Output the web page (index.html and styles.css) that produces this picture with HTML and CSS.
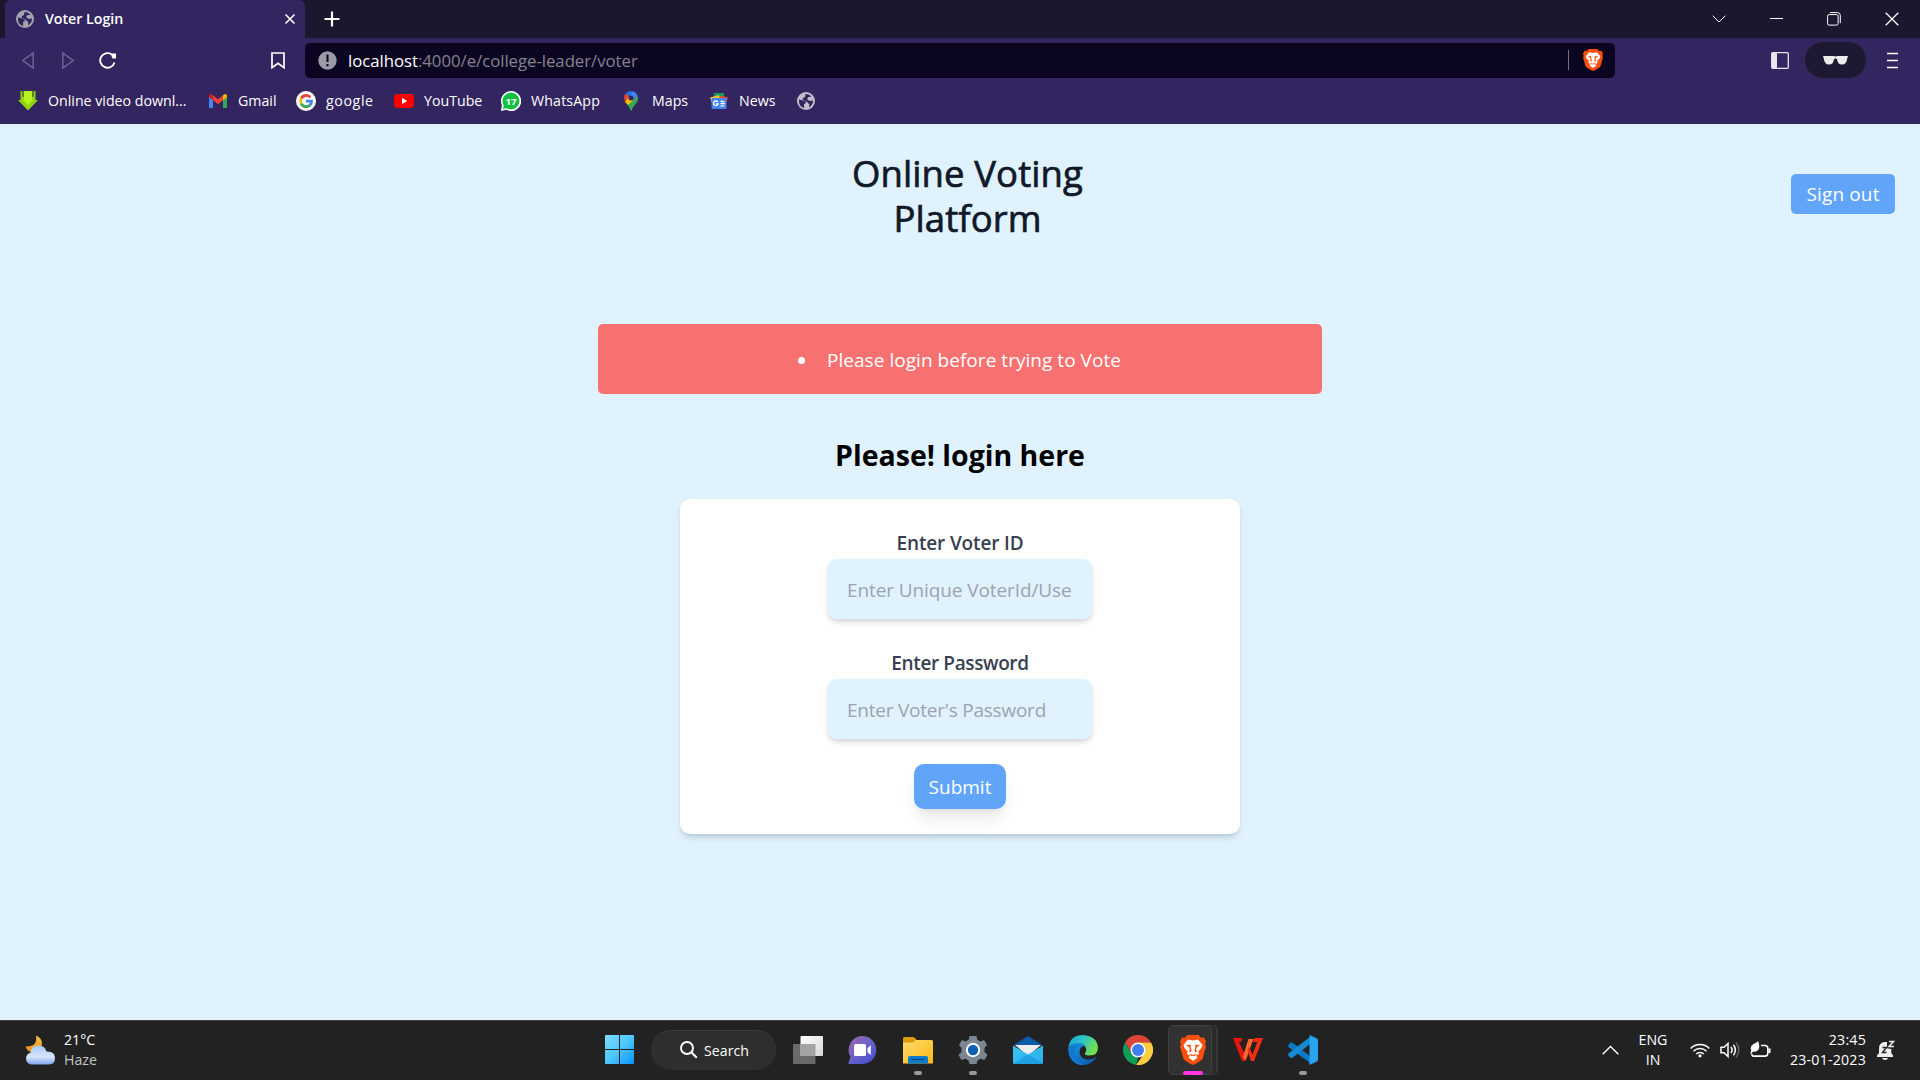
FILE: index.html
```html
<!DOCTYPE html>
<html lang="en">
<head>
<meta charset="utf-8">
<title>Voter Login</title>
<link rel="stylesheet" href="styles.css">
</head>
<body>
<svg class="defs" width="0" height="0">
  <symbol id="globe" viewBox="0 0 18 18"><circle cx="9" cy="9" r="9"/><path class="land" d="M2 7.200Q3.500 8 6 8.200L8.500 9.500 9 11 7 12 7.200 16Q2 14.500 2 9zM8.500 2Q12.500 1.700 14.500 4.700L11.500 5 10 7 12.500 9 16 8.500Q16 13 12 15.400L12.300 12.300 9.500 9.500 6.200 8 5.500 6.300 8 5z"/></symbol>
  <symbol id="brave" viewBox="0 0 26 30"><path d="M7.500 0h11L21 2.700l3-.3 2 4-1 3 1 2-3.300 12Q21 26 13 30 5 26 3.300 23.400L0 11.400l1-2-1-3 2-4 3 .3z"/><path fill="#fff" d="M8 4.500 13 5.500 18 4.500 22.500 10 21.500 13 18.300 16.500 19 19 16 20.500 17.500 22.500 13 26 8.500 22.500 10 20.500 7 19 7.700 16.500 4.500 13 3.500 10z"/><path class="cut" d="M6 10.300 11 9.500 10.500 11 11.500 15.500 10.500 17.500 9 16.500 10 14 9 12zM20 10.300 15 9.500 15.500 11 14.500 15.500 15.500 17.500 17 16.500 16 14 17 12zM9 18.500 13 20 17 18.500 14.500 21.300 13 20.800 11.500 21.300z"/></symbol>
</svg>
<div class="screen">
  <header class="browser">
    <div class="tabstrip">
      <div class="tab">
        <svg class="favicon" width="18" height="18"><use href="#globe"/></svg>
        <span class="tab-title t">Voter Login</span>
        <svg width="12" height="12" viewBox="0 0 12 12" class="line"><path stroke-width="1.600" d="M1.500 1.500l9 9M10.500 1.500l-9 9"/></svg>
      </div>
      <svg class="newtab line" width="16" height="16" viewBox="0 0 16 16"><path stroke-width="2.200" d="M8 .5v15M.5 8h15"/></svg>
      <div class="window-controls">
        <svg width="14" height="8" viewBox="0 0 14 8" class="line"><path d="M.7.7 7 7l6.300-6.300"/></svg>
        <svg width="13" height="14" viewBox="0 0 13 14" class="line"><path d="M0 6.500h13"/></svg>
        <svg width="14" height="14" viewBox="0 0 14 14" class="line"><rect x=".6" y="2.600" width="10.500" height="10.500" rx="1.500"/><path d="M3 .6h7.500q2.800 0 2.800 2.800V11"/></svg>
        <svg width="14" height="14" viewBox="0 0 14 14" class="line"><path stroke-width="1.300" d="M.7.7l12.600 12.600M13.300.7.7 13.300"/></svg>
      </div>
    </div>
    <div class="toolbar">
      <svg class="nav-back" width="12" height="17" viewBox="0 0 12 17"><path d="M11.200 1v15L.9 8.500z"/></svg>
      <svg class="nav-forward" width="12" height="17" viewBox="0 0 12 17"><path d="M.8 1v15L11.100 8.500z"/></svg>
      <svg class="reload line" width="18" height="17" viewBox="0 0 18 17"><path stroke-width="1.900" d="M15.500 10.500A7.300 7.300 0 1 1 12.500 2.300"/><path fill="#fff" stroke="none" d="M11.500 1.500l5.500 0V6.500h-3.500z"/></svg>
      <svg class="save line" width="14" height="17" viewBox="0 0 14 17"><path stroke-width="1.700" d="M1 1h12v14.700L7 11.200 1 15.700z"/></svg>
      <div class="address">
        <svg width="19" height="19" viewBox="0 0 19 19"><circle cx="9.500" cy="9.500" r="9.200" fill="#9a9ba6"/><path stroke="#0c0522" stroke-width="2" d="M9.500 3.500v7.500M9.500 13v2.200"/></svg>
        <span class="url"><span class="host t">localhost</span><span class="path t">:4000/e/college-leader/voter</span></span>
        <i class="divider"></i>
        <svg class="brave" width="20" height="22" viewBox="0 0 26 30" preserveAspectRatio="none"><use href="#brave" width="26" height="30"/></svg>
      </div>
      <svg class="sidebar" width="18" height="17" viewBox="0 0 18 17"><rect x=".7" y=".7" width="16.600" height="15.600" rx="1" fill="none" stroke="#e8e6ee" stroke-width="1.300"/><path fill="#e8e6ee" d="M1 1h5v15H1z"/></svg>
      <div class="private"><svg width="25" height="9" viewBox="0 0 25 9" fill="#ebebeb"><path d="M0 0h10.500q2 .8 4 0H25l-.7 2.200Q23.500 8.500 19 8.500T14 3Q12.500 2 11 3 10.500 8.500 6 8.500T.7 2.200z"/></svg></div>
      <svg class="menu line" width="12" height="17" viewBox="0 0 12 17"><path stroke-width="1.700" d="M0 1.500h11M0 8.500h11M0 15.500h11"/></svg>
    </div>
    <nav class="bookmarks">
      <a class="bm b1"><svg width="20" height="20" viewBox="0 0 20 20"><path fill="#8fd60a" d="M2.500 0H17.500V9H20L10 19.500 0 9h2.500z"/><path fill="#b9f022" d="M6 0h8v10l-4 4-4-4z"/><path stroke="#33255f" d="M5 0v6M15 0v6"/></svg><span class="t">Online video downl...</span></a>
      <a class="bm b2"><svg width="18" height="14" viewBox="0 0 18 14"><path fill="#4285f4" d="M0 2.500 4 5.500V14H1.300Q0 14 0 12.700z"/><path fill="#34a853" d="M18 2.500 14 5.500V14h2.700q1.300 0 1.300-1.300z"/><path fill="#ea4335" d="M4 1.300 9 5.200l5-3.900v5L9 10.200 4 6.300z"/><path fill="#c5221f" d="M0 2Q.2-.8 3 .5l1 .8v5L0 3.300z"/><path fill="#fbbc04" d="M18 2q-.2-2.800-3-1.500l-1 .8v5l4-3z"/></svg><span class="t">Gmail</span></a>
      <a class="bm b3"><svg width="20" height="20" viewBox="0 0 20 20" fill="none" stroke-width="2.800"><circle cx="10" cy="10" r="10" fill="#fff"/><path stroke="#ea4335" d="M5.200 7.300A5.600 5.600 0 0 1 14.200 6.300"/><path stroke="#fbbc05" d="M5.200 7.300a5.600 5.600 0 0 0 0 5.400"/><path stroke="#34a853" d="M5.200 12.700a5.600 5.600 0 0 0 8.500 1.700"/><path stroke="#4285f4" d="M13.700 14.400Q15.500 12.800 15.500 10.200H10"/></svg><span class="t">google</span></a>
      <a class="bm b4"><svg width="20" height="14" viewBox="0 0 20 14"><rect width="20" height="14" rx="3.500" fill="#f00"/><path fill="#fff" d="M8 4l5.300 3L8 10z"/></svg><span class="t">YouTube</span></a>
      <a class="bm b5"><svg width="20" height="20" viewBox="0 0 20 20"><path fill="#fff" d="M10 0a10 10 0 1 1-4.600 18.800L0 20l.8-6A10 10 0 0 1 10 0z"/><path fill="#12c143" d="M10 1.600a8.400 8.400 0 1 1-4.300 15.600L2 18l.7-3.700A8.400 8.400 0 0 1 10 1.600z"/><text x="10" y="13.800" text-anchor="middle" class="wa-count">17</text></svg><span class="t">WhatsApp</span></a>
      <a class="bm b6"><svg width="14" height="20" viewBox="0 0 14 20"><path fill="#34a853" d="M13.600 5Q15 9 12 12.500 8.500 16 7.600 19.500h-1.200Q6 17 3.500 13.500z"/><path fill="#fbbc04" d="M1 10.500 5 5l4.500 4-5.700 5Q1.500 11.800 1 10.500z"/><path fill="#ea4335" d="M1.600 2.500 5 5.300.8 10.300Q-.8 6 1.600 2.500z"/><path fill="#1a73e8" d="M1.600 2.500Q4-.6 8.600.2L5 5.300z"/><path fill="#4285f4" d="M8.600.2Q12 1 13.600 5L9.300 9.200 5 5.300z"/><circle cx="7" cy="7" r="2.500" fill="#33255f"/></svg><span class="t">Maps</span></a>
      <a class="bm b7"><svg width="18" height="16" viewBox="0 0 18 16"><path fill="#0f9d58" d="M4 0h10v6H4z"/><path fill="#fbc02d" d="M0 4.500 9 2l2 5-9 3z"/><path fill="#ea4335" d="M10 2.500l8 2-1.500 5H9z"/><rect x="1.500" y="5" width="15" height="11" rx="1" fill="#4285f4"/><path fill="none" stroke="#fff" stroke-width="1.300" d="M7.700 9A2.300 2.300 0 1 0 8 11H6M10.500 8.500h3.700M10.500 10.700h4.500M10.500 12.900h3.700"/></svg><span class="t">News</span></a>
      <svg class="site" width="18" height="18"><use href="#globe"/></svg>
    </nav>
  </header>

  <main class="page">
    <div class="topbar">
      <h1 class="brand"><span>Online Voting</span><span>Platform</span></h1>
      <button class="signout"><span class="t">Sign out</span></button>
    </div>
    <div class="alert"><i class="bullet"></i><span class="t">Please login before trying to Vote</span></div>
    <h2 class="heading"><span class="t">Please! login here</span></h2>
    <form class="card">
      <label class="voter"><span class="t">Enter Voter ID</span></label>
      <div class="field f1"><span class="t">Enter Unique VoterId/Use</span></div>
      <label class="pass"><span class="t">Enter Password</span></label>
      <div class="field f2"><span class="t">Enter Voter's Password</span></div>
      <button type="button" class="submit"><span class="t">Submit</span></button>
    </form>
  </main>

  <footer class="taskbar">
    <div class="weather">
      <svg width="30" height="30" viewBox="0 0 30 30"><defs><linearGradient id="moon" x2="0" y2="1"><stop stop-color="#f5c342"/><stop offset="1" stop-color="#f28a1c"/></linearGradient><linearGradient id="cloud" x2="0" y2="1"><stop stop-color="#a9c8fa"/><stop offset=".6" stop-color="#d5e4fb"/><stop offset="1" stop-color="#7fa6ec"/></linearGradient></defs><path fill="url(#moon)" d="M11 .5Q17 3 17 8.500T11 16.500Q3 19 .5 11.500 13 12 11 .5z"/><path fill="url(#cloud)" d="M6 29.500a6 6 0 0 1-.5-11.700Q6 10.500 13.500 10.500q6.500 0 8 6Q30 16 30 23q0 6.500-6 6.500z"/></svg>
      <div class="two-line"><span class="t">21°C</span><span class="t dim">Haze</span></div>
    </div>
    <div class="dock">
      <svg class="start" width="29" height="29" viewBox="0 0 29 29"><defs><linearGradient id="win" gradientUnits="userSpaceOnUse" x2="29" y2="29"><stop stop-color="#7ddcff"/><stop offset=".5" stop-color="#4cc8ff"/><stop offset="1" stop-color="#0a91ff"/></linearGradient></defs><path fill="url(#win)" d="M1 0h13v14H0V1q0-1 1-1zM15 0h13q1 0 1 1v13H15zM0 15h14v14H1q-1 0-1-1zM15 15h14v13q0 1-1 1H15z"/></svg>
      <div class="search"><svg width="18" height="18" viewBox="0 0 18 18" class="line"><circle cx="7" cy="7" r="6" stroke-width="1.900"/><path stroke-width="2.200" d="M11.300 11.300l5.500 5.500"/></svg><span class="t">Search</span></div>
      <div class="app"><svg width="30" height="28" viewBox="0 0 30 28"><defs><linearGradient id="tv" x2="1" y2="1"><stop stop-color="#fff"/><stop offset="1" stop-color="#d8d8d8"/></linearGradient></defs><rect y="8" width="22.500" height="20" rx="1" fill="#6a6a6a"/><rect x="7.500" width="22.500" height="20" rx="1" fill="url(#tv)"/><path fill="#a4a4a4" d="M7.500 8h15v12h-15z"/></svg></div>
      <div class="app"><svg width="29" height="28" viewBox="0 0 29 28"><defs><linearGradient id="chat" x2=".8" y2="1"><stop stop-color="#a363a8"/><stop offset=".5" stop-color="#6f65c5"/><stop offset="1" stop-color="#464fd0"/></linearGradient></defs><path fill="url(#chat)" d="M15 0a14 14 0 1 1-1.500 28H1.200Q0 28 .5 26.500L2.500 21A14 14 0 0 1 15 0z"/><rect x="6" y="8" width="12" height="12" rx="1.500" fill="#fff"/><path fill="#fff" d="M19.500 12.300 22.800 9.300V19l-3.300-2.700z"/></svg></div>
      <div class="app"><svg width="30" height="28" viewBox="0 0 30 28"><defs><linearGradient id="fold" x2="1" y2="1"><stop stop-color="#ffdc6b"/><stop offset="1" stop-color="#fdb813"/></linearGradient></defs><path fill="#dc9b07" d="M0 2.500Q0 1 1.500 1H10q1 0 2 1l2 2.500V9H0z"/><path fill="url(#fold)" d="M0 6.500h10L13 4h15.500Q30 4 30 5.500V27.500H0z"/><path fill="#0c7bcb" d="M5 27.500V22q0-2 2-2h16q2 0 2 2v5.500z"/><path stroke="#08467d" stroke-width="1.200" d="M8.500 23.500h13"/></svg><i class="run"></i></div>
      <div class="app"><svg width="30" height="28" viewBox="0 0 30 28"><path fill="#7b8691" d="M11.500 0h7l.8 3.800 3 1.600L26 4l3 5-2.500 3v4l3 2.800-3 5.200-4-1.300-3 1.800-1 3.500h-7l-1-3.500-3-1.800-4 1.300L.5 18.800 3.500 16v-4L1 9l3-5 3.700 1.400 3-1.600z"/><circle cx="15" cy="14" r="7.200" fill="#fff"/><circle cx="15" cy="14" r="5.200" fill="#0d62b3"/></svg><i class="run"></i></div>
      <div class="app"><svg width="30" height="28" viewBox="0 0 30 28"><defs><linearGradient id="ml" x2="1" y2="1"><stop stop-color="#3cc5f5"/><stop offset="1" stop-color="#28aeea"/></linearGradient></defs><path fill="#0a5ca8" d="M0 9.500 15 0l15 9.500z"/><path fill="#eee" d="M2 9h26L15 20z"/><path fill="url(#ml)" d="M0 9.500 15 18.500 30 9.500V26.500Q30 28 28.500 28h-27Q0 28 0 26.500z"/><path fill="#1590dc" d="M15 18.500 30 27.500 28.500 28h-27L.5 27.500z" opacity=".55"/></svg></div>
      <div class="app"><svg width="30" height="30" viewBox="0 0 30 30"><defs><linearGradient id="eg" x2="1" y2=".4"><stop stop-color="#19a5dc"/><stop offset=".5" stop-color="#2cc3c6"/><stop offset="1" stop-color="#72e04e"/></linearGradient><linearGradient id="eb" x2="1" y2="1"><stop stop-color="#1b9de2"/><stop offset="1" stop-color="#0b52a6"/></linearGradient></defs><path fill="url(#eg)" d="M.3 13Q2 0 15 0q14 1 15 12.500 0 8-8.500 8-5.500 0-4.500-2.500 2-2 1-5-2-4.500-8-4.800Q3 8.500.3 13z"/><path fill="url(#eb)" d="M.2 14Q2.500 7.500 10 7.700q5 .3 7.500 3.300-6-.5-6 6.500 1.500 7 8.500 7 4 .3 7.500-2.300.8 0 .5.600Q23.500 30 15 30 1 29 .2 14z"/><path fill="#1278d6" d="M11 10.500Q4.500 16 7.500 22.500 10 28 17 29.800 9 31 4 25-1 18 2 11.500 6 8 11 10.500z"/></svg></div>
      <div class="app"><svg width="30" height="30" viewBox="0 0 30 30"><path fill="#db4437" d="M2 7.500a15 15 0 0 1 26 0H15L9 18.500z"/><path fill="#0f9d58" d="M2 7.500 8.700 18.800 15 22.500l-1.500 7.400A15 15 0 0 1 2 7.500z"/><path fill="#ffcd40" d="M28 7.500a15 15 0 0 1-14.700 22.400l7.700-11.700L15 7.500z"/><circle cx="15" cy="15" r="7.500" fill="#fff"/><circle cx="15" cy="15" r="6" fill="#3f7df0"/></svg></div>
      <div class="app active"><div class="tile"></div><svg class="brave" width="26" height="30"><use href="#brave"/></svg><i class="run"></i></div>
      <div class="app"><svg width="30" height="23" viewBox="0 0 30 23"><path fill="#e8160c" d="M0 0h9.500L8 4H6l5 11L15.500 1h5L12 23H9z"/><path fill="#ff6a2c" d="M15.500 1h4.800l-7.500 21.500-3-3.500z"/><path fill="#f52e12" d="M16 8l3.500 9L24.300 4H20L21.500 0H30l-9 23h-3l-3.500-10z"/></svg></div>
      <div class="app"><svg width="30" height="30" viewBox="0 0 30 30"><path fill="#0b7ac5" d="M1 9 3 7.500l1.500.2L22 21v7L.6 12.200Q-.3 10.500 1 9z"/><path fill="#1689d2" d="M1 21.500l2 1.500 1.500-.2L22 9V2L.6 18.300Q-.3 20 1 21.500z"/><path fill="#28a3f1" d="M21.500 0 28.500 3.200Q30 4 30 5.500v19q0 1.500-1.500 2.300L21.500 30z"/></svg><i class="run"></i></div>
    </div>
    <div class="tray">
      <svg class="up line" width="17" height="10" viewBox="0 0 17 10"><path stroke-width="1.400" d="M.7 9.200 8.500 1.400l7.800 7.800"/></svg>
      <div class="two-line lang"><span class="t">ENG</span><span class="t">IN</span></div>
      <svg class="wifi line" width="20" height="16" viewBox="0 0 20 16"><path stroke-width="1.500" d="M.7 6.500a13 13 0 0 1 18.600 0M3.500 9.300a9.200 9.200 0 0 1 13 0M6.200 12a5.400 5.400 0 0 1 7.600 0"/><circle cx="10" cy="13.800" r="1.600" fill="#fff" stroke="none"/></svg>
      <svg class="vol line" width="20" height="18" viewBox="0 0 20 18"><path stroke-width="1.500" d="M1 6.200h3L8 2.500v13L4 11.800H1zM10.800 6a4.500 4.500 0 0 1 0 6M13.300 3.800a7.500 7.500 0 0 1 0 10.400"/><path stroke="#666" stroke-width="1.500" d="M16 1.800a10.500 10.500 0 0 1 0 14.400"/></svg>
      <svg class="bat line" width="21" height="18" viewBox="0 0 21 18"><path stroke-width="1.600" d="M11 4.500H15q2.800 0 2.800 2.800v5q0 2.800-2.800 2.800H4.500Q2 15.500 1.800 13"/><path fill="#fff" stroke="none" d="M8 0Q10.500 6 8.200 9 6 11.500 3 10.500L1 13 .2 12.200 1.300 9.500Q-.5 5 3.500 3 6.500 2 8 0zM18.500 7.500h2v4.500h-2z"/></svg>
      <div class="two-line clock"><span class="t">23:45</span><span class="t">23-01-2023</span></div>
      <svg class="bell" width="18" height="20" viewBox="0 0 18 20"><path fill="#eee" d="M8 2Q1.800 3 2 9v4L0 15.500V17h16v-1.500L14.300 13V9L8 8zM5 18h6q-.5 2-3 2t-3-2z"/><path fill="#eee" d="M2.500 6Q4 1.500 10 2v7H3z"/><path fill="none" stroke="#222" stroke-width="1.400" d="M5.500 7.500h4l-4 5h4"/><path fill="none" stroke="#eee" stroke-width="1.500" d="M12 1.500h4.500L12 6.500h5"/></svg>
    </div>
  </footer>
</div>
</body>
</html>
```
FILE: styles.css
```css
* { box-sizing: border-box; }
body { margin: 0; font-family: "Open Sans", "Noto Sans", sans-serif; overflow: hidden; }
h1, h2 { margin: 0; }
button { border: 0; padding: 0; font: inherit; }
svg { display: block; flex: none; }
.defs { position: absolute; }
.line { fill: none; stroke: #fff; }
.t { white-space: nowrap; }
.screen { width: 1920px; height: 1080px; display: flex; flex-direction: column; overflow: hidden; }

.browser { height: 124px; background: #33255f; color: #fff; }
.tabstrip { height: 38px; background: #1a172e; display: flex; align-items: center; padding-left: 5px; }
.tab { width: 300px; height: 38px; border-radius: 6px 6px 0 0; background: #33255f; display: flex; align-items: center; padding: 0 9px 0 11px; }
.favicon { fill: #a2a3ad; }
.land { fill: #33255f; }
.tab-title { margin-left: 11px; margin-right: auto; padding-bottom: 1px; font-size: 14.2px; font-weight: 600; }
.newtab { margin-left: 19px; }
.window-controls { margin-left: auto; display: flex; align-items: center; gap: 44px; padding-right: 21px; }
.toolbar { height: 43px; display: flex; align-items: center; padding: 1px 21px 0 22px; }
.nav-back, .nav-forward { fill: none; stroke: #756a94; stroke-width: 1.4; }
.nav-forward { margin-left: 28px; }
.reload { margin-left: 25px; }
.save { margin-left: 154px; }
.address { margin-left: 20px; width: 1310px; flex: none; height: 35px; border-radius: 5px; background: #0c0522; display: flex; align-items: center; padding: 0 12px 0 13px; }
.url { margin-left: 11px; font-size: 16.8px; letter-spacing: -.04px; display: flex; white-space: nowrap; }
.path { color: #85828f; }
.divider { width: 1px; height: 20px; background: #777386; margin-left: auto; }
.address .brave { margin-left: 14px; }
.brave, .cut { fill: #fb4f0e; }
.sidebar { margin-left: 156px; }
.private { margin-left: 16px; width: 61px; height: 36px; border-radius: 18px; background: #1e1933; display: flex; align-items: center; justify-content: center; }
.menu { margin-left: 21px; }
.bookmarks { height: 43px; padding: 0 0 3px 18px; display: flex; align-items: center; font-size: 14.2px; }
.bm { display: flex; align-items: center; height: 40px; }
.bm .t { padding-bottom: 2px; }
.b1 { width: 191px; gap: 10px; }
.b2 { width: 87px; gap: 11px; }
.b3 { width: 98px; gap: 10px; }
.b3 .t { letter-spacing: .6px; }
.b4 { width: 107px; gap: 10px; }
.b5 { width: 123px; gap: 10px; }
.b5 .t { letter-spacing: .15px; }
.b6 { width: 86px; gap: 14px; }
.b7 { width: 87px; gap: 11px; }
.site { fill: #c2bfcc; }
.wa-count { font: 700 9.5px "Open Sans", sans-serif; fill: #fff; }

.page { height: 896px; background: #dff2fe; display: flex; flex-direction: column; align-items: center; font-size: 19px; }
.topbar { width: 100%; height: 200px; display: grid; grid-template-columns: 1fr 320px 1fr; padding: 27px 25px 0; }
.brand { grid-column: 2; width: 335px; font-size: 36.5px; line-height: 45px; font-weight: 400; letter-spacing: .1px; -webkit-text-stroke: .7px #111827; color: #111827; text-align: center; }
.brand span { display: block; height: 45px; }
.signout { justify-self: end; margin-top: 23px; width: 104px; height: 40px; border-radius: 5px; background: #60a5fa; color: #fff; letter-spacing: .15px; }
.alert { width: 724px; height: 70px; border-radius: 5px; background: #f87171; color: #fff; display: flex; align-items: center; padding: 2px 0 0 200px; letter-spacing: .04px; }
.bullet { width: 7px; height: 7px; border-radius: 50%; background: #fff; margin-right: 22px; }
.heading { margin-top: 41px; height: 64px; font-size: 28.5px; line-height: 40px; font-weight: 700; color: #000; }
.card { width: 560px; height: 335px; border-radius: 10px; background: #fff; box-shadow: 0 5px 7px -1px rgba(0,0,0,.1), 0 3px 5px -2px rgba(0,0,0,.1); display: flex; flex-direction: column; align-items: center; padding-top: 30px; }
.card label { height: 30px; line-height: 28px; font-weight: 600; color: #374151; letter-spacing: -.15px; }
.card .pass { margin-top: 30px; letter-spacing: -.38px; }
.field { width: 266px; height: 60px; border-radius: 10px; background: #dff2fe; color: #9ca3af; padding-left: 20px; line-height: 62px; box-shadow: 0 5px 7px -1px rgba(0,0,0,.1), 0 3px 5px -2px rgba(0,0,0,.1); letter-spacing: -.1px; }
.f2 { letter-spacing: -.23px; }
.submit { margin-top: 25px; padding-top: 1px; width: 92px; height: 45px; border-radius: 10px; background: #60a5fa; color: #fff; box-shadow: 0 12px 19px -4px rgba(0,0,0,.1), 0 5px 7px -5px rgba(0,0,0,.1); }

.taskbar { height: 60px; background: #222; border-top: 1px solid #3d4244; color: #fff; font-size: 14.2px; display: flex; align-items: center; padding-bottom: 2px; }
.weather { width: 605px; padding-left: 25px; display: flex; align-items: center; gap: 9px; }
.two-line { display: flex; flex-direction: column; line-height: 20px; }
.dim { color: #c3c3c3; }
.dock { display: flex; align-items: center; height: 57px; }
.search { margin: 0 4px 0 17px; width: 125px; height: 40px; border-radius: 20px; background: #2e2e2e; border-top: 1px solid #3d3d3d; display: flex; align-items: center; padding-left: 29px; gap: 6px; }
.app { width: 55px; height: 57px; position: relative; display: flex; align-items: center; justify-content: center; }
.run { position: absolute; bottom: 3px; left: 24px; width: 8px; height: 4px; border-radius: 2px; background: #9a9a9a; }
.active .run { left: 18px; width: 20px; background: #ff37e3; }
.tile { position: absolute; left: 3px; top: 4px; width: 44px; height: 50px; border-radius: 5px; background: #323232; border: 1px solid #404040; box-shadow: 5px 0 0 -1px #2b2b2b, 6px 0 0 0 #383838; }
.active svg { position: relative; }
.tray { margin-left: auto; display: flex; align-items: center; height: 57px; }
.lang { width: 40px; margin: 0 17px 0 14px; text-align: center; }
.vol { margin-left: 10px; }
.bat { margin-left: 10px; }
.clock { width: 85px; margin: 0 11px 0 10px; text-align: right; letter-spacing: .2px; }
.bell { margin-right: 25px; }
```
